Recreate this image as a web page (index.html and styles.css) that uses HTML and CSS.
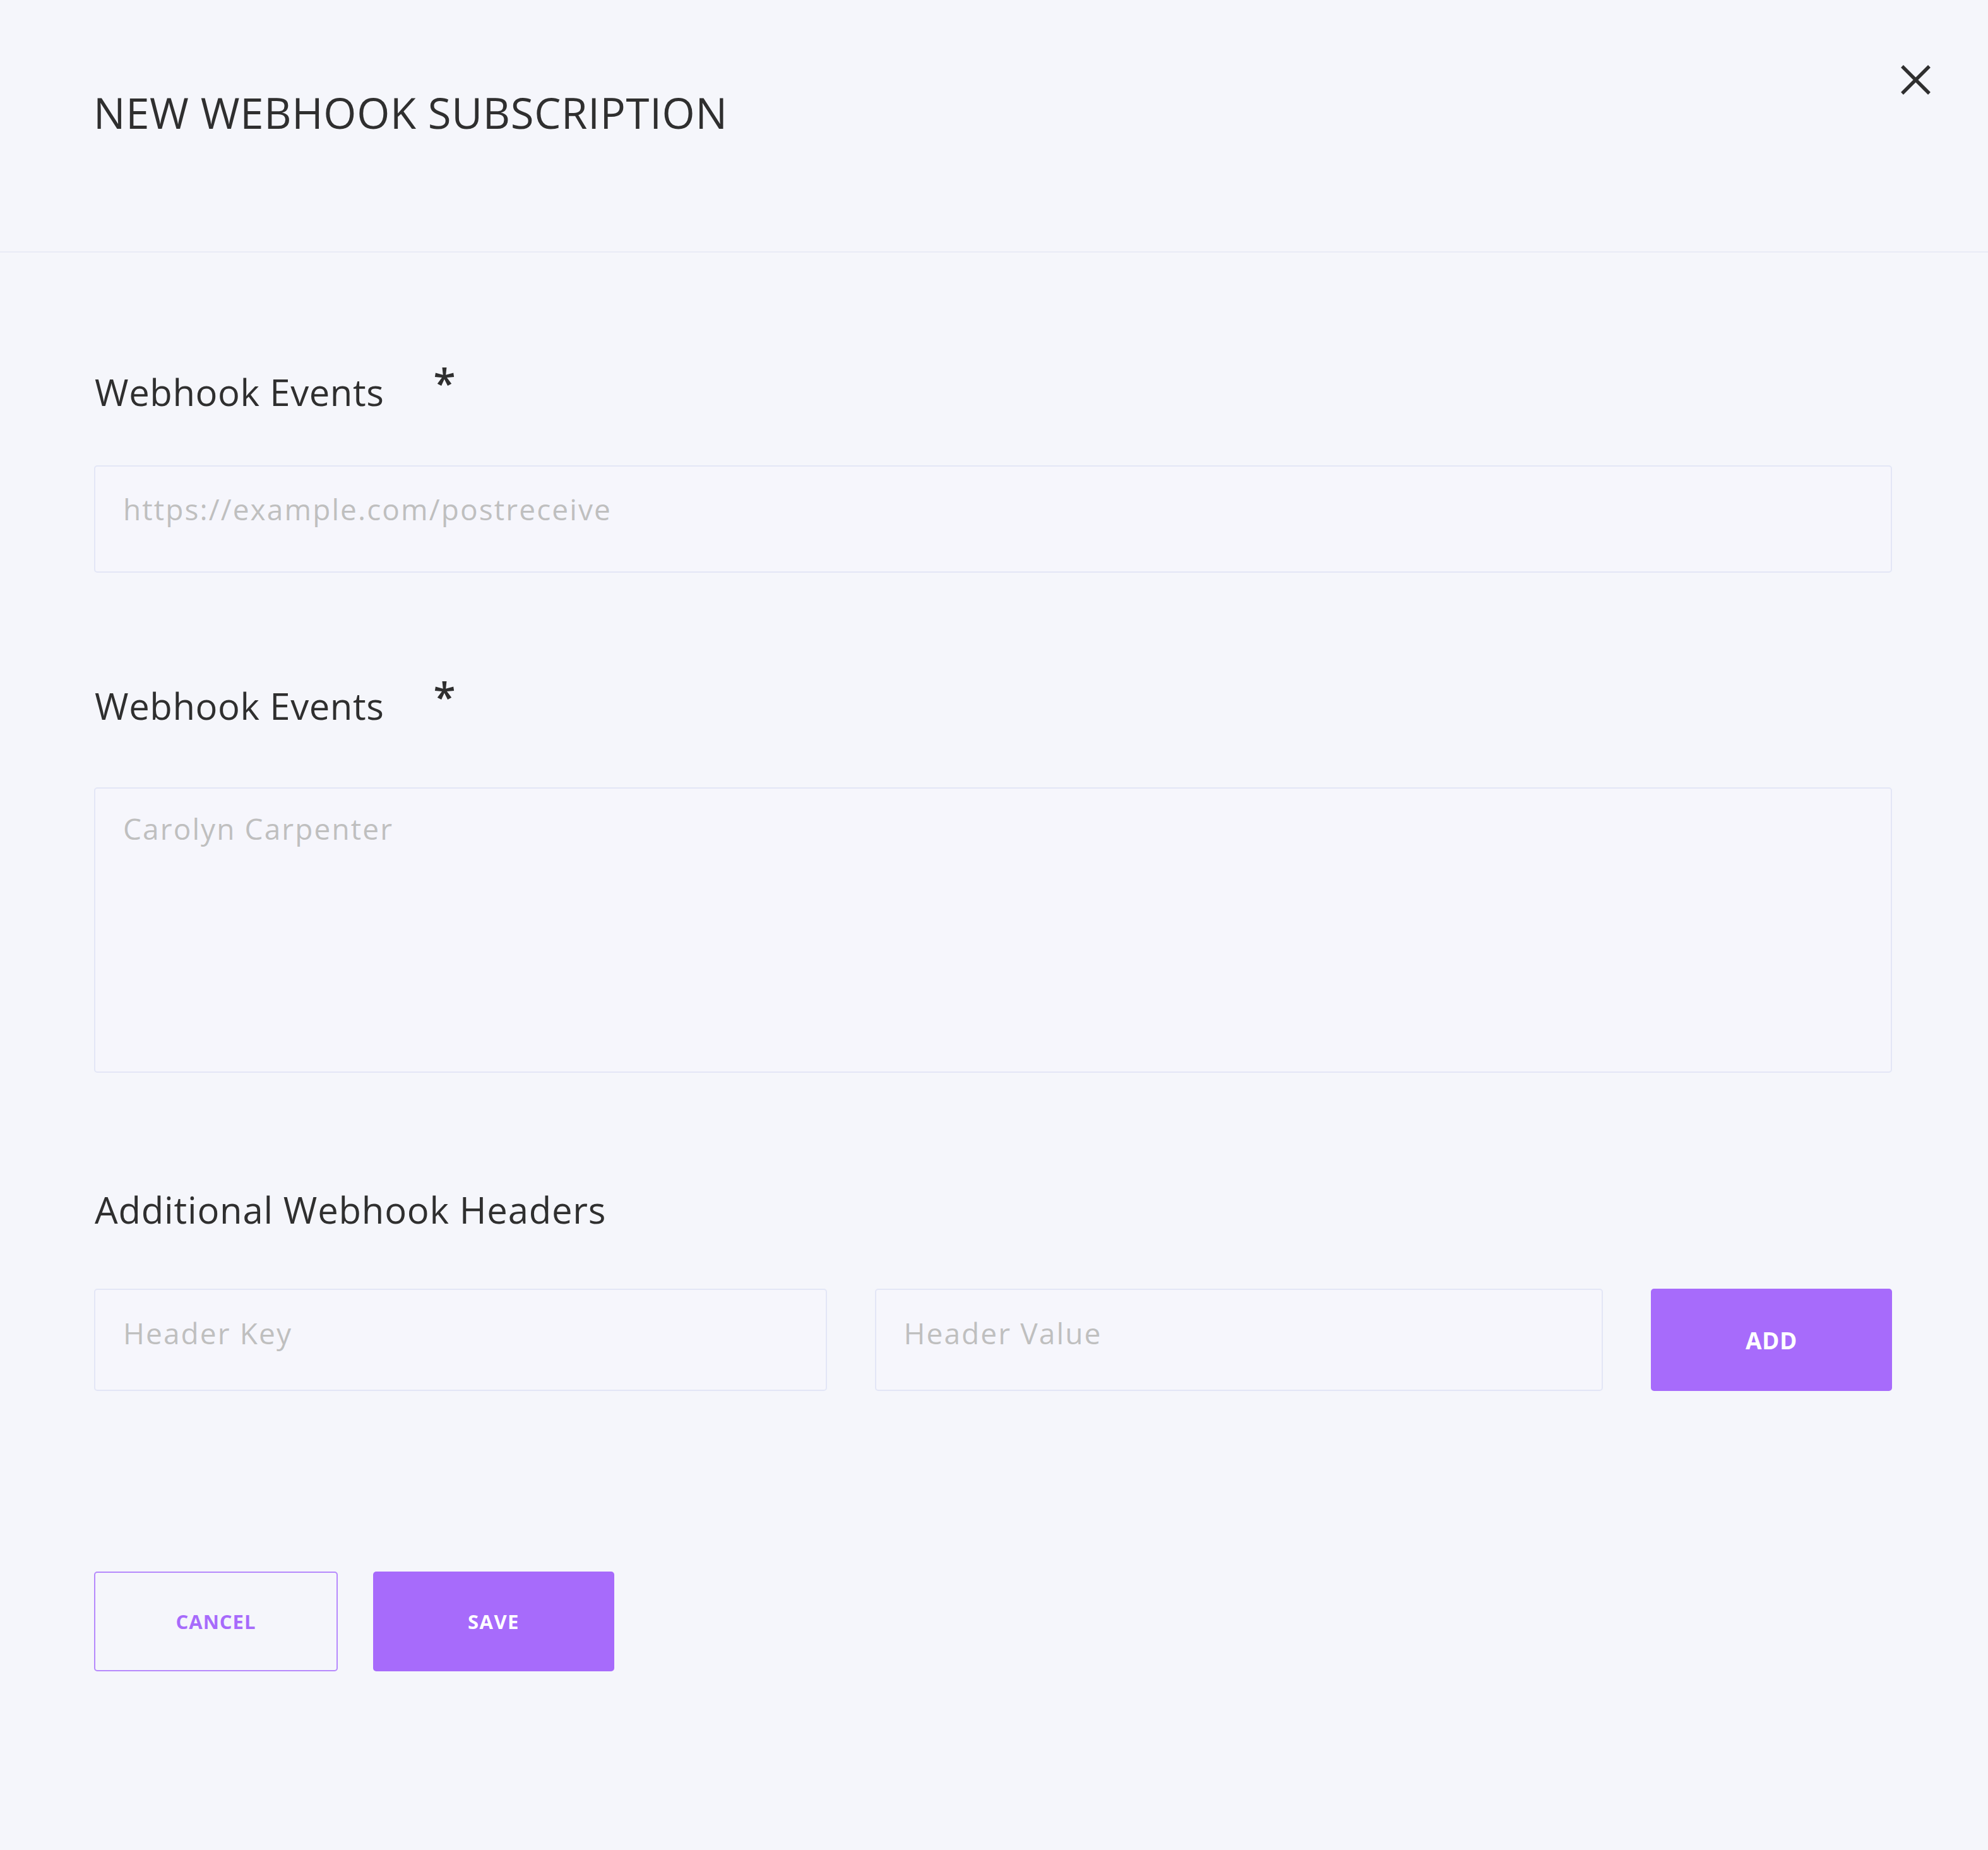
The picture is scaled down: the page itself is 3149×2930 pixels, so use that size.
FILE: index.html
```html
<!DOCTYPE html>
<html lang="en">
<head>
<meta charset="utf-8">
<title>New Webhook Subscription</title>
<link rel="stylesheet" href="styles.css">
</head>
<body>
<div class="modal">
  <header class="modal-header">
    <h1 class="modal-title">NEW WEBHOOK SUBSCRIPTION</h1>
    <button class="close-btn" type="button" aria-label="Close">
      <svg width="47" height="47" viewBox="0 0 47 47" aria-hidden="true">
        <path d="M2 2 L45 45 M45 2 L2 45" stroke="#2f2f2f" stroke-width="5.5" fill="none"/>
      </svg>
    </button>
  </header>
  <form class="modal-body">
    <label class="field-label label-1">Webhook Events<span class="req">*</span></label>
    <input class="text-input url-input" type="text" placeholder="https://example.com/postreceive">

    <label class="field-label label-2">Webhook Events<span class="req">*</span></label>
    <textarea class="text-area" placeholder="Carolyn Carpenter"></textarea>

    <label class="field-label label-3">Additional Webhook Headers</label>
    <div class="header-row">
      <input class="text-input row-input" type="text" placeholder="Header Key">
      <input class="text-input row-input" type="text" placeholder="Header Value">
      <button class="btn btn-primary btn-add" type="button">ADD</button>
    </div>

    <div class="actions">
      <button class="btn btn-outline" type="button">CANCEL</button>
      <button class="btn btn-primary btn-save" type="button">SAVE</button>
    </div>
  </form>
</div>
</body>
</html>
```

FILE: styles.css
```css
html, body {
  margin: 0;
  padding: 0;
  background: #f5f6fb;
}

body {
  font-family: "Open Sans", "Liberation Sans", sans-serif;
  color: #333333;
}

.modal {
  min-height: 2930px;
  box-sizing: border-box;
}

.modal-header {
  box-sizing: border-box;
  height: 400px;
  border-bottom: 2px solid #e9ebf6;
  display: flex;
  justify-content: space-between;
  align-items: flex-start;
  padding: 0 91px 0 148px;
}

.modal-title {
  margin: 145px 0 0 0;
  font-size: 67px;
  line-height: 67px;
  font-weight: 400;
  letter-spacing: 0.7px;
  color: #2f2f2f;
}

.close-btn {
  margin-top: 103px;
  padding: 0;
  border: 0;
  background: transparent;
  width: 47px;
  height: 47px;
  display: block;
  cursor: pointer;
}

.close-btn svg {
  display: block;
}

.modal-body {
  display: flex;
  flex-direction: column;
  align-items: stretch;
  padding: 0 152px 0 149px;
}

.field-label {
  display: block;
  font-size: 58px;
  line-height: 58px;
  font-weight: 400;
  letter-spacing: 0.6px;
  color: #2f2f2f;
  padding-left: 1px;
}

.label-1 { margin-top: 192px; margin-bottom: 87px; }
.label-2 { margin-top: 182px; margin-bottom: 100px; }
.label-3 { margin-top: 188px; margin-bottom: 96px; letter-spacing: 0.8px; }

.req {
  font-size: 64px;
  line-height: 0;
  font-weight: 600;
  letter-spacing: 0;
  margin-left: 78px;
  vertical-align: 13px;
  color: #2f2f2f;
}

.text-input,
.text-area {
  box-sizing: border-box;
  width: 100%;
  margin: 0;
  border: 2px solid #e3e6f6;
  border-radius: 5px;
  background: #f6f6fc;
  font-family: "Open Sans", "Liberation Sans", sans-serif;
  font-size: 46px;
  letter-spacing: 2.1px;
  color: #333333;
  outline: none;
}

.text-input::placeholder,
.text-area::placeholder {
  color: #bfbfbf;
  opacity: 1;
}

.url-input {
  height: 170px;
  padding: 0 44px 32px 44px;
}

.text-area {
  display: block;
  height: 452px;
  padding: 32px 44px 0 44px;
  line-height: normal;
  resize: none;
}

.header-row {
  display: grid;
  grid-template-columns: 1160fr 1153fr 382px;
  column-gap: 76px;
  height: 162px;
}

.row-input {
  height: 162px;
  padding: 0 44px 22px 44px;
}

.btn {
  box-sizing: border-box;
  margin: 0;
  border-radius: 5px;
  font-family: "Open Sans", "Liberation Sans", sans-serif;
  font-weight: 700;
  cursor: pointer;
  display: flex;
  align-items: center;
  justify-content: center;
}

.btn-primary {
  background: #a76bfb;
  border: 0;
  color: #ffffff;
}

.btn-add {
  height: 162px;
  font-size: 37px;
  letter-spacing: 0.5px;
}

.actions {
  display: flex;
  gap: 56px;
  margin-top: 286px;
}

.btn-outline {
  width: 386px;
  height: 158px;
  background: transparent;
  border: 2px solid #b68afc;
  color: #a76bfb;
  font-size: 31px;
  letter-spacing: 1px;
}

.btn-save {
  width: 382px;
  height: 158px;
  font-size: 31px;
  letter-spacing: 1.5px;
}
```
